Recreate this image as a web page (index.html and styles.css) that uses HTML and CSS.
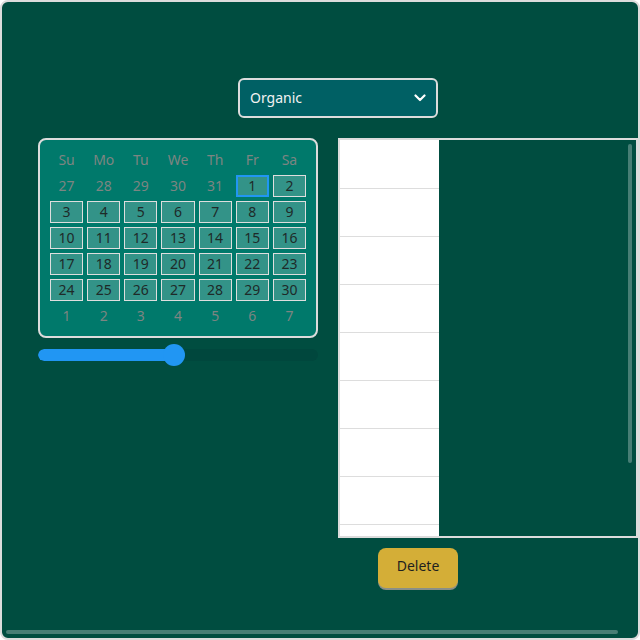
FILE: index.html
```
<!DOCTYPE html>
<html>
<head>
<meta charset="utf-8">
<link rel="stylesheet" href="styles.css">
</head>
<body>
<div class="frame">
  <div class="content">
    <div class="select-row">
      <div class="select">
        <span>Organic</span>
        <svg class="chev" width="12" height="8" viewBox="0 0 12 8"><polyline points="1.5,1.5 6,6 10.5,1.5" fill="none" stroke="#fff" stroke-width="2.2" stroke-linecap="round" stroke-linejoin="round"/></svg>
      </div>
    </div>
    <div class="main">
      <div class="left">
        <div class="calendar">
          <div class="hd">Su</div><div class="hd">Mo</div><div class="hd">Tu</div><div class="hd">We</div><div class="hd">Th</div><div class="hd">Fr</div><div class="hd">Sa</div>
          <div class="out">27</div><div class="out">28</div><div class="out">29</div><div class="out">30</div><div class="out">31</div><div class="day sel">1</div><div class="day">2</div>
          <div class="day">3</div><div class="day">4</div><div class="day">5</div><div class="day">6</div><div class="day">7</div><div class="day">8</div><div class="day">9</div>
          <div class="day">10</div><div class="day">11</div><div class="day">12</div><div class="day">13</div><div class="day">14</div><div class="day">15</div><div class="day">16</div>
          <div class="day">17</div><div class="day">18</div><div class="day">19</div><div class="day">20</div><div class="day">21</div><div class="day">22</div><div class="day">23</div>
          <div class="day">24</div><div class="day">25</div><div class="day">26</div><div class="day">27</div><div class="day">28</div><div class="day">29</div><div class="day">30</div>
          <div class="out">1</div><div class="out">2</div><div class="out">3</div><div class="out">4</div><div class="out">5</div><div class="out">6</div><div class="out">7</div>
        </div>
        <div class="slider">
          <div class="track"><div class="fill" style="width:136px"></div></div>
          <div class="thumb" style="left:125px"></div>
        </div>
      </div>
      <div class="right">
        <div class="panel">
          <div class="col">
            <div class="row"></div><div class="row"></div><div class="row"></div><div class="row"></div><div class="row"></div><div class="row"></div><div class="row"></div><div class="row"></div><div class="row"></div>
          </div>
          <div class="dark"><div class="vthumb"></div></div>
        </div>
        <button class="delete">Delete</button>
      </div>
    </div>
  </div>
  <div class="hbar"></div>
</div>
</body>
</html>
```
FILE: styles.css
```
* { box-sizing: border-box; }
html, body { margin: 0; padding: 0; background: #ffffff; }
body { font-family: "Noto Sans", "Open Sans", sans-serif; font-size: 14px; }
.frame {
  width: 640px; height: 640px;
  border: 2px solid #dcdcdc; border-radius: 8px;
  background: #004d40;
  display: flex; flex-direction: column;
  overflow: hidden;
}
.content { flex: 1; padding: 76px 0 0 36px; display: flex; flex-direction: column; min-height: 0; }
.select-row { width: 600px; display: flex; justify-content: center; }
.select {
  width: 200px; height: 40px;
  border: 2px solid #dcdcdc; border-radius: 6px;
  background: #006064; color: #f2f2f2;
  padding: 0 10px 1px 10px;
  display: flex; align-items: center; justify-content: space-between;
  font-size: 14px;
}
.chev { display: block; }
.main { display: flex; gap: 20px; margin-top: 20px; }
.left { width: 280px; display: flex; flex-direction: column; }
.calendar {
  width: 280px; height: 200px;
  border: 2px solid #dcdcdc; border-radius: 8px;
  background: #00796b;
  padding: 9px 10px 8px 10px;
  display: grid;
  grid-template-columns: repeat(7, 1fr);
  grid-template-rows: repeat(7, 22px);
  column-gap: 4px; row-gap: 4px;
}
.hd, .out, .day { display: flex; align-items: center; justify-content: center; font-size: 14px; line-height: 1; }
.hd, .out { color: #7d8582; }
.day {
  background: rgba(255,255,255,0.2);
  border: 1px solid #dedede;
  color: #1e2a28;
}
.day.sel { border: 2px solid #2196f3; }
.slider { position: relative; width: 280px; height: 23px; margin-top: 6px; }
.track { margin-top: 5px; height: 12px; border-radius: 6px; background: #00473d; overflow: hidden; }
.fill { height: 12px; background: #2196f3; border-radius: 6px 0 0 6px; }
.thumb { position: absolute; top: 0; width: 22px; height: 22px; border-radius: 50%; background: #2196f3; }
.right { display: flex; flex-direction: column; align-items: flex-start; }
.panel {
  width: 300px; height: 400px;
  border: 2px solid #dcdcdc;
  display: flex; overflow: hidden;
}
.col { width: 99px; background: #ffffff; display: flex; flex-direction: column; padding-top: 1px; }
.row { height: 48px; flex: none; border-bottom: 1px solid #dddddd; }
.dark { flex: 1; background: #004d40; display: flex; justify-content: flex-end; padding: 4px 4px 0 0; }
.vthumb { width: 4px; height: 319px; background: rgba(255,255,255,0.28); border-radius: 2px; }
.delete {
  margin-top: 10px; margin-left: 40px;
  width: 80px; height: 40px;
  background: #d4ae37; color: #1f1f1f;
  border: none; border-radius: 8px;
  box-shadow: 0 2px 0 #8a8f86;
  font-family: inherit; font-size: 14px;
  padding: 0 0 6px 0;
}
.hbar { height: 4px; margin: 0 20px 4px 4px; background: rgba(255,255,255,0.28); border-radius: 2px; flex: none; }
```
